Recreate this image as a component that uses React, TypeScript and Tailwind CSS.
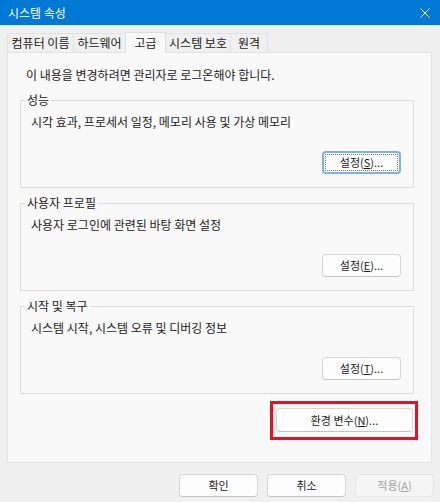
import React from "react";

const FONT = "font-['Noto_Sans_CJK_KR','Noto_Sans',sans-serif]";

function Btn({
  children,
  w = "w-[79px]",
  h = "h-[23px]",
  focused = false,
  disabled = false,
}: {
  children: React.ReactNode;
  w?: string;
  h?: string;
  focused?: boolean;
  disabled?: boolean;
}) {
  if (focused) {
    return (
      <div
        className={`relative ${w} ${h} rounded-[4px] border-2 border-[#7db2e4] bg-[#fdfdfd] flex items-center justify-center text-[#1b1b1b]`}
      >
        <span className="absolute inset-[1px] border border-dotted border-[#7a7a7a]"></span>
        <span className="relative leading-none">{children}</span>
      </div>
    );
  }
  if (disabled) {
    return (
      <div
        className={`${w} ${h} rounded-[4px] border border-[#e5e5e5] bg-[#f5f5f5] flex items-center justify-center text-[#a3a3a3]`}
      >
        <span className="leading-none">{children}</span>
      </div>
    );
  }
  return (
    <div
      className={`${w} ${h} rounded-[4px] border border-[#d6d6d6] border-b-[#c4c4c4] bg-[#fdfdfd] flex items-center justify-center text-[#1b1b1b]`}
    >
      <span className="leading-none">{children}</span>
    </div>
  );
}

function U({ c }: { c: string }) {
  return <span className="underline underline-offset-[1px]">{c}</span>;
}

function Group({
  title,
  text,
  mnemonic,
  focused = false,
  className = "",
}: {
  title: string;
  text: string;
  mnemonic: string;
  focused?: boolean;
  className?: string;
}) {
  return (
    <fieldset
      className={`w-[394px] border border-[#dcdcdc] pb-[13px] ${className}`}
    >
      <legend className="ml-[4px] px-[2px] leading-[14px] text-[#1b1b1b]">
        {title}
      </legend>
      <div className="mt-[7px] pl-[10px] leading-[16px]">{text}</div>
      <div className="mt-[21px] flex justify-end pr-[12px] text-[11px]">
        <Btn focused={focused}>
          설정(<U c={mnemonic} />)...
        </Btn>
      </div>
    </fieldset>
  );
}

export default function App() {
  const tabs = [
    { label: "컴퓨터 이름", w: "w-[67px]" },
    { label: "하드웨어", w: "w-[53px]" },
    { label: "고급", w: "w-[41px]", active: true },
    { label: "시스템 보호", w: "w-[66px]" },
    { label: "원격", w: "w-[38px]" },
  ];
  return (
    <div
      className={`w-[440px] h-[502px] bg-[#f0f0f0] flex flex-col ${FONT} text-[12px] text-[#1b1b1b]`}
    >
      {/* Title bar */}
      <div className="h-[25px] bg-[#0078d4] flex items-center justify-between pl-[8px] pr-[10px] text-white">
        <span className="leading-none">시스템 속성</span>
        <svg width="10" height="10" viewBox="0 0 10 10" className="text-white">
          <path d="M0.5 0.5 L9.5 9.5 M9.5 0.5 L0.5 9.5" stroke="currentColor" strokeWidth="1" fill="none" />
        </svg>
      </div>

      {/* Tabs */}
      <div className="mt-[7px] pl-[7px] h-[20px] flex items-end">
        {tabs.map((t, i) =>
          t.active ? (
            <div
              key={t.label}
              className={`relative z-10 ${t.w} h-[21px] -mb-px -ml-px bg-[#f9f9f9] border-t border-l border-r border-[#dedede] flex items-center justify-center leading-none`}
            >
              {t.label}
            </div>
          ) : (
            <div
              key={t.label}
              className={`${t.w} h-[19px] ${i > 0 ? "-ml-px" : ""} bg-[#f0f0f0] border-t border-l border-r border-[#e1e1e1] flex items-center justify-center leading-none`}
            >
              {t.label}
            </div>
          )
        )}
      </div>

      {/* Panel */}
      <div className="ml-[7px] w-[425px] h-[411px] bg-[#f9f9f9] border border-[#e3e3e3] pl-[12px] pr-[17px] pt-[14px] flex flex-col">
        <div className="ml-[6px] leading-[16px]">
          이 내용을 변경하려면 관리자로 로그온해야 합니다.
        </div>
        <Group
          className="mt-[10px]"
          title="성능"
          text="시각 효과, 프로세서 일정, 메모리 사용 및 가상 메모리"
          mnemonic="S"
          focused
        />
        <Group
          className="mt-[8px]"
          title="사용자 프로필"
          text="사용자 로그인에 관련된 바탕 화면 설정"
          mnemonic="E"
        />
        <Group
          className="mt-[8px]"
          title="시작 및 복구"
          text="시스템 시작, 시스템 오류 및 디버깅 정보"
          mnemonic="T"
        />
        <div className="mt-[7px] flex justify-end mr-[-4px] text-[11px]">
          <div className="border-[3px] border-[#e81123] pt-[4px] pb-[5px] pl-[3px] pr-[2px]">
            <Btn w="w-[137px]" h="h-[24px]">
              환경 변수(<U c="N" />)...
            </Btn>
          </div>
        </div>
      </div>

      {/* Bottom buttons */}
      <div className="mt-[11px] flex justify-end gap-[9px] pr-[6px] text-[11px]">
        <Btn>확인</Btn>
        <Btn>취소</Btn>
        <Btn disabled>
          적용(<U c="A" />)
        </Btn>
      </div>
    </div>
  );
}
